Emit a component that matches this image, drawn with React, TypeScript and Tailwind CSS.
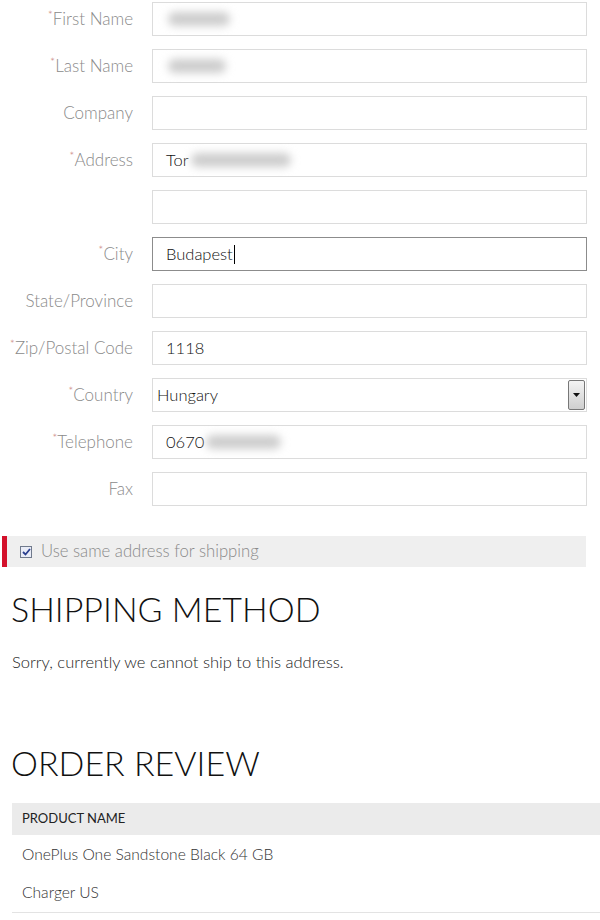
import React from "react"

type Field = {
  label: string
  required?: boolean
  value?: string
  blur?: number
  focused?: boolean
  select?: boolean
}

const fields: Field[] = [
  { label: "First Name", required: true, blur: 62 },
  { label: "Last Name", required: true, blur: 58 },
  { label: "Company" },
  { label: "Address", required: true, value: "Tor", blur: 100 },
  { label: "" },
  { label: "City", required: true, value: "Budapest", focused: true },
  { label: "State/Province" },
  { label: "Zip/Postal Code", required: true, value: "1118" },
  { label: "Country", required: true, value: "Hungary", select: true },
  { label: "Telephone", required: true, value: "0670", blur: 75 },
  { label: "Fax" },
]

function Blurred({ width }: { width: number }) {
  return <span className="inline-block h-[14px] rounded-full bg-[#cdcdcd] blur-[4px]" style={{ width }} />
}

function Row({ f }: { f: Field }) {
  return (
    <div className="flex items-center">
      <div className="w-[133px] whitespace-nowrap text-right text-[17px] text-[#8a8a8a]">
        {f.label && f.required && <span className="text-[12px] align-top text-[#c9837d]">*</span>}
        {f.label}
      </div>
      {f.select ? (
        <div className="ml-[19px] flex h-[34px] w-[435px] items-center border border-[#dcdcdc] bg-white pl-[4px] pr-[1px]">
          <span className="flex-1 text-[16.5px] text-[#111]">{f.value}</span>
          <div className="flex h-[30px] w-[17px] items-center justify-center rounded-[2px] border border-[#777] bg-gradient-to-b from-[#f4f4f4] to-[#cfcfcf]">
            <svg width="7" height="4" viewBox="0 0 7 4">
              <path d="M0 0h7L3.5 4z" fill="#111" />
            </svg>
          </div>
        </div>
      ) : (
        <div
          className={`ml-[19px] flex h-[34px] w-[435px] items-center border bg-white pl-[13px] text-[16.5px] text-[#111] ${
            f.focused ? "border-[#8c8c8c]" : "border-[#dcdcdc]"
          }`}
        >
          {f.value && <span>{f.value}</span>}
          {f.focused && <span className="ml-[1px] inline-block h-[19px] w-[1px] bg-black" />}
          {f.blur && (
            <span className="ml-[2px] flex items-center">
              <Blurred width={f.blur} />
            </span>
          )}
        </div>
      )}
    </div>
  )
}

export default function App() {
  return (
    <div className="w-[600px] h-[920px] overflow-hidden bg-white font-['Lato','Open_Sans',sans-serif] font-light text-[#222]">
      <div className="flex flex-col gap-[13px] pt-[2px]">
        {fields.map((f, i) => (
          <Row key={i} f={f} />
        ))}
      </div>

      <div className="ml-[2px] mt-[30px] flex h-[31px] w-[584px] items-center border-l-[5px] border-[#d3112b] bg-[#efefef]">
        <span className="ml-[13px] flex h-[12px] w-[12px] items-center justify-center border border-[#707a8c] bg-[#e9ecf7]">
          <svg width="9" height="8" viewBox="0 0 9 8">
            <path d="M1 4l2.5 2.5L8 1" fill="none" stroke="#2a3f8f" strokeWidth="1.8" />
          </svg>
        </span>
        <span className="ml-[9px] text-[16.7px] text-[#8a8a8a]">Use same address for shipping</span>
      </div>

      <h2 className="ml-[11px] mt-[21px] text-[34px] leading-[42px] font-light text-[#111]">SHIPPING METHOD</h2>
      <p className="ml-[12px] mt-[20px] text-[16.5px] leading-[24px] text-[#222]">
        Sorry, currently we cannot ship to this address.
      </p>

      <h2 className="ml-[11px] mt-[68px] text-[34px] leading-[42px] font-light text-[#111]">ORDER REVIEW</h2>

      <div className="ml-[12px] mt-[19px]">
        <div className="flex h-[32px] items-center bg-[#ebebeb] pl-[10px] text-[13px] font-normal text-[#222]">
          PRODUCT NAME
        </div>
        <div className="flex h-[39px] items-center pl-[10px] text-[15.6px] text-[#333]">OnePlus One Sandstone Black 64 GB</div>
        <div className="flex h-[39px] items-center border-b border-[#e3e3e3] pl-[10px] text-[15.6px] text-[#333]">
          Charger US
        </div>
      </div>
    </div>
  )
}
